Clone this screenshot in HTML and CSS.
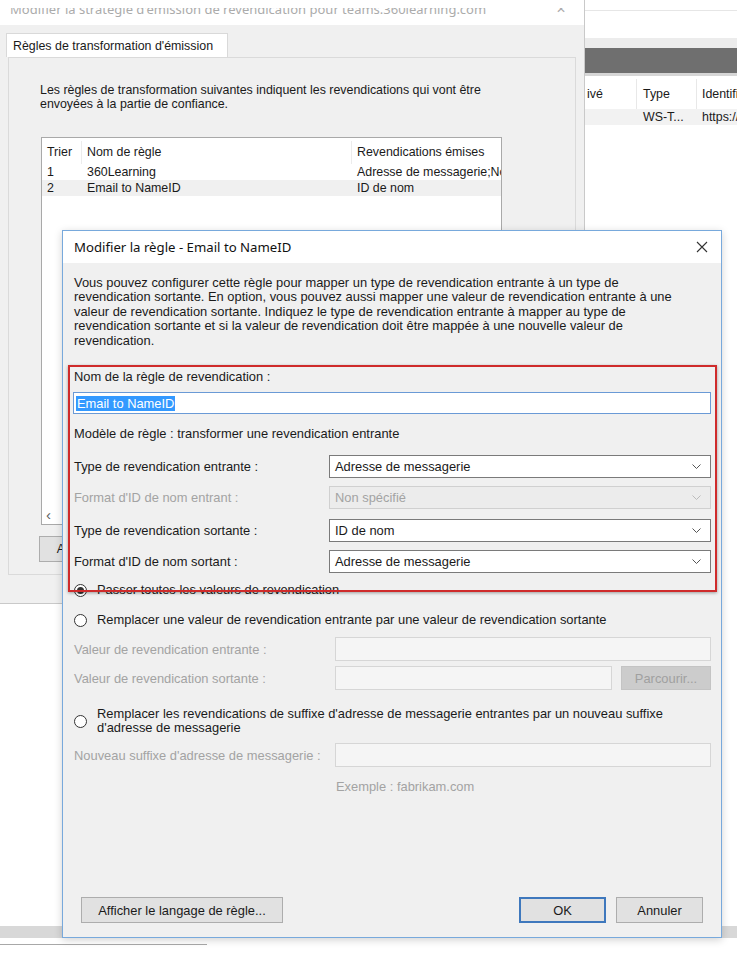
FILE: index.html
```html
<!DOCTYPE html>
<html lang="fr">
<head>
    <meta charset="utf-8">
    <link rel="stylesheet" href="styles.css">
</head>
<body>
<div class="desk">

    <!-- console behind, only its right edge shows -->
    <div class="mmc">
        <div class="mmc-top"></div>
        <div class="mmc-band"></div>
        <div class="mmc-dark"></div>
        <div class="mmc-head">
            <span class="m1">ivé</span><span class="m2">Type</span><span class="m3">Identificateur</span>
        </div>
        <div class="mmc-row">
            <span class="m1"></span><span class="m2">WS-T...</span><span class="m3">https://</span>
        </div>
    </div>

    <div class="under"></div>
    <div class="under-line"></div>

    <!-- properties window -->
    <div class="props">
        <div class="props-title">
            <div class="caption">
                <span>Modifier la stratégie d'émission de revendication pour teams.360learning.com</span>
                <span class="props-x">✕</span>
            </div>
        </div>
        <div class="props-body">
            <div class="tabs">
                <div class="tab">Règles de transformation d'émission</div>
            </div>
            <div class="tab-page">
                <p class="intro">Les règles de transformation suivantes indiquent les revendications qui vont être<br>envoyées à la partie de confiance.</p>
                <div class="list">
                    <div class="list-head">
                        <span class="ca">Trier</span><span class="cb">Nom de règle</span><span class="cc">Revendications émises</span>
                    </div>
                    <div class="list-row">
                        <span class="ca">1</span><span class="cb">360Learning</span><span class="cc">Adresse de messagerie;Nom</span>
                    </div>
                    <div class="list-row sel">
                        <span class="ca">2</span><span class="cb">Email to NameID</span><span class="cc">ID de nom</span>
                    </div>
                    <div class="list-fill"></div>
                    <div class="hscroll"><span>‹</span></div>
                </div>
                <div class="list-buttons">
                    <button class="btn">Ajouter une règle...</button>
                </div>
            </div>
        </div>
    </div>

    <!-- rule dialog -->
    <div class="dialog">
        <div class="dlg-title">
            <span>Modifier la règle - Email to NameID</span>
            <svg class="dlg-x" width="12" height="12" viewBox="0 0 12 12"><path d="M1 1L11 11M11 1L1 11" stroke="#333" stroke-width="1.1" fill="none"/></svg>
        </div>
        <div class="dlg-body">
            <p class="desc">Vous pouvez configurer cette règle pour mapper un type de revendication entrante à un type de<br>revendication sortante. En option, vous pouvez aussi mapper une valeur de revendication entrante à une<br>valeur de revendication sortante. Indiquez le type de revendication entrante à mapper au type de<br>revendication sortante et si la valeur de revendication doit être mappée à une nouvelle valeur de<br>revendication.</p>

            <div class="lbl name-lbl">Nom de la règle de revendication :</div>
            <div class="textbox focus"><span class="hl">Email to NameID</span></div>
            <div class="lbl tpl-lbl">Modèle de règle : transformer une revendication entrante</div>

            <div class="row r1">
                <span class="row-lbl">Type de revendication entrante :</span>
                <div class="combo"><span>Adresse de messagerie</span><svg width="9" height="5" viewBox="0 0 9 5"><path d="M0.5 0.5L4.5 4.5L8.5 0.5" stroke="#555" fill="none"/></svg></div>
            </div>
            <div class="row r2 off">
                <span class="row-lbl">Format d'ID de nom entrant :</span>
                <div class="combo"><span>Non spécifié</span><svg width="9" height="5" viewBox="0 0 9 5"><path d="M0.5 0.5L4.5 4.5L8.5 0.5" stroke="#bbb" fill="none"/></svg></div>
            </div>
            <div class="row r3">
                <span class="row-lbl">Type de revendication sortante :</span>
                <div class="combo"><span>ID de nom</span><svg width="9" height="5" viewBox="0 0 9 5"><path d="M0.5 0.5L4.5 4.5L8.5 0.5" stroke="#555" fill="none"/></svg></div>
            </div>
            <div class="row r4">
                <span class="row-lbl">Format d'ID de nom sortant :</span>
                <div class="combo"><span>Adresse de messagerie</span><svg width="9" height="5" viewBox="0 0 9 5"><path d="M0.5 0.5L4.5 4.5L8.5 0.5" stroke="#555" fill="none"/></svg></div>
            </div>

            <div class="radio rad1"><span class="dot on"></span>Passer toutes les valeurs de revendication</div>
            <div class="radio rad2"><span class="dot"></span>Remplacer une valeur de revendication entrante par une valeur de revendication sortante</div>

            <div class="row off v1">
                <span class="row-lbl">Valeur de revendication entrante :</span>
                <div class="textbox"></div>
            </div>
            <div class="row off v2">
                <span class="row-lbl">Valeur de revendication sortante :</span>
                <div class="textbox"></div>
                <button class="btn browse">Parcourir...</button>
            </div>

            <div class="radio rad3"><span class="dot"></span><span>Remplacer les revendications de suffixe d'adresse de messagerie entrantes par un nouveau suffixe<br>d'adresse de messagerie</span></div>

            <div class="row off v3">
                <span class="row-lbl">Nouveau suffixe d'adresse de messagerie :</span>
                <div class="textbox"></div>
            </div>
            <div class="example">Exemple : fabrikam.com</div>

            <div class="dlg-buttons">
                <button class="btn wide">Afficher le langage de règle...</button>
                <span class="spacer"></span>
                <button class="btn default">OK</button>
                <button class="btn">Annuler</button>
            </div>
        </div>
        <div class="redbox"></div>
    </div>

</div>
</body>
</html>
```

FILE: styles.css
```css
html, body {
    margin: 0;
    background: #fff;
}

.desk {
    position: relative;
    width: 737px;
    height: 957px;
    overflow: hidden;
    font-family: "Liberation Sans", Arial, sans-serif;
    font-size: 12.4px;
    color: #1a1a1a;
}

button {
    font: inherit;
}

/* ---- console at the right ---- */

.mmc {
    position: absolute;
    left: 585px;
    top: 0;
    width: 200px;
    height: 160px;
    background: #fff;
}

.mmc-top {
    height: 10px;
    border-bottom: 1px solid #e6e6e6;
}

.mmc-band {
    margin-top: 27px;
    height: 10px;
    background: #ececec;
}

.mmc-dark {
    height: 25px;
    background: #6f6f6f;
    border-bottom: 3px solid #d6d6d6;
}

.mmc-head,
.mmc-row {
    display: flex;
    white-space: nowrap;
}

.mmc-head {
    margin-top: 3px;
    height: 30px;
    align-items: center;
}

.mmc-head span {
    height: 30px;
    line-height: 30px;
    border-right: 1px solid #e8e8e8;
}

.mmc-row {
    height: 16px;
    line-height: 16px;
    background: #f2f2f2;
}

.m1 { width: 52px; padding-left: 2px; box-sizing: border-box; flex: none; }
.m2 { width: 60px; padding-left: 6px; box-sizing: border-box; flex: none; }
.m3 { width: 80px; padding-left: 5px; box-sizing: border-box; flex: none; }

/* ---- stuff peeking below ---- */

.under {
    position: absolute;
    left: 0;
    top: 926px;
    width: 737px;
    height: 12px;
    background: #d8d8d8;
}

.under-line {
    position: absolute;
    left: 0;
    top: 944px;
    width: 207px;
    height: 1px;
    background: #a8a8a8;
}

/* ---- properties window ---- */

.props {
    position: absolute;
    left: -10px;
    top: -15px;
    width: 594px;
    height: 618px;
    background: #f0f0f0;
    border-right: 1px solid #c9c9c9;
    border-bottom: 1px solid #c9c9c9;
    display: flex;
    flex-direction: column;
}

.props-title {
    height: 40px;
    box-sizing: border-box;
    padding: 23px 16px 0 20px;
    background: #fff;
}

/* the screenshot cuts the caption through the middle */
.caption {
    height: 9px;
    overflow: hidden;
    display: flex;
    align-items: flex-end;
    color: #ababab;
    font-family: "Noto Sans", sans-serif;
    font-size: 13px;
    white-space: nowrap;
}

.caption span {
    line-height: 16px;
    flex: none;
}

.caption .props-x {
    margin-left: auto;
    margin-right: 2px;
    font-size: 12px;
}

.props-body {
    padding: 8px 8px 0 16px;
}

.tabs {
    display: flex;
    height: 24px;
}

.tab {
    background: #fff;
    border: 1px solid #d9d9d9;
    border-bottom: none;
    padding: 0 6px;
    line-height: 24px;
    width: 208px;
}

.tab-page {
    margin-left: 2px;
    height: 516px;
    border: 1px solid #dadada;
    background: #f0f0f0;
}

.intro {
    margin: 25px 0 0 31px;
    line-height: 14.4px;
}

.list {
    margin: 25px 0 0 32px;
    width: 459px;
    height: 386px;
    background: #fff;
    border: 1px solid #a9a9a9;
    display: flex;
    flex-direction: column;
}

.list-head,
.list-row {
    display: flex;
    white-space: nowrap;
    overflow: hidden;
}

.list-head {
    height: 23px;
    line-height: 23px;
    margin-top: 3px;
}

.list-head span {
    border-right: 1px solid #ececec;
}

.list-row {
    height: 16px;
    line-height: 16px;
}

.list-row.sel {
    background: #f0f0f0;
}

.ca { width: 40px; padding-left: 5px; box-sizing: border-box; flex: none; }
.cb { width: 270px; padding-left: 5px; box-sizing: border-box; flex: none; }
.cc { width: 160px; padding-left: 5px; box-sizing: border-box; flex: none; }

.list-fill {
    flex: 1;
}

.hscroll {
    height: 18px;
    line-height: 18px;
    padding-left: 4px;
    font-size: 15px;
    color: #606060;
}

.list-buttons {
    margin: 11px 0 0 30px;
}

.btn {
    background: #e1e1e1;
    border: 1px solid #adadad;
    color: #1a1a1a;
    padding: 0;
    height: 26px;
}

.list-buttons .btn {
    width: 140px;
}

/* ---- rule dialog ---- */

.dialog {
    position: absolute;
    left: 62px;
    top: 230px;
    width: 660px;
    height: 708px;
    box-sizing: border-box;
    border: 1px solid #78a9dc;
    background: #f0f0f0;
    box-shadow: 0 2px 8px rgba(0, 0, 0, 0.18);
    display: flex;
    flex-direction: column;
    font-size: 12.9px;
}

.dlg-title {
    height: 32px;
    background: #fff;
    display: flex;
    align-items: center;
    padding: 0 13px 0 11px;
    font-family: "Noto Sans", sans-serif;
    font-size: 13.2px;
    color: #111;
}

.dlg-x {
    margin-left: auto;
}

.dlg-body {
    flex: 1;
    padding: 13px 10px 14px 10px;
    display: flex;
    flex-direction: column;
}

.desc {
    margin: 0 0 0 1px;
    line-height: 14.4px;
}

.lbl {
    height: 16px;
    line-height: 16px;
    padding-left: 1px;
}

.name-lbl { margin-top: 21px; }
.tpl-lbl { margin-top: 12px; }

.textbox {
    height: 22px;
    box-sizing: border-box;
    background: #fff;
    border: 1px solid #abadb3;
    display: flex;
    align-items: center;
    padding-left: 2px;
}

.textbox.focus {
    margin-top: 7px;
    border-color: #6a9ad6;
}

.hl {
    background: #3399ff;
    color: #fff;
    line-height: 15px;
    padding: 0 1px;
}

.row {
    display: flex;
    align-items: center;
    height: 23px;
}

.row-lbl {
    width: 255px;
    padding-left: 1px;
    flex: none;
    white-space: nowrap;
}

.r1 { margin-top: 13px; }
.r2 { margin-top: 8px; }
.r3 { margin-top: 10px; }
.r4 { margin-top: 8px; }

.combo {
    flex: 1;
    height: 23px;
    box-sizing: border-box;
    background: #fff;
    border: 1px solid #7a7a7a;
    display: flex;
    align-items: center;
    padding: 0 9px 0 5px;
}

.combo span {
    flex: 1;
}

.off .row-lbl,
.off .combo span {
    color: #a3a3a3;
}

.off .combo {
    background: #ececec;
    border-color: #d0d0d0;
}

.radio {
    display: flex;
    align-items: flex-start;
    line-height: 14px;
    padding-left: 1px;
}

.dot {
    width: 13px;
    height: 13px;
    box-sizing: border-box;
    border: 1px solid #333;
    border-radius: 50%;
    background: #fff;
    margin: 1px 10px 0 0;
    flex: none;
    position: relative;
}

.dot.on::after {
    content: "";
    position: absolute;
    left: 2px;
    top: 2px;
    width: 7px;
    height: 7px;
    border-radius: 50%;
    background: #333;
}

.rad1 { margin-top: 10px; }
.rad2 { margin-top: 16px; }
.rad3 { margin-top: 17px; align-items: center; }

.v1, .v2, .v3 {
    height: 24px;
}

.v1 { margin-top: 10px; }
.v2 { margin-top: 5px; }
.v3 { margin-top: 8px; }

.off .textbox {
    flex: 1;
    height: 24px;
    margin-left: 6px;
    background: #f5f5f5;
    border-color: #d6d6d6;
}

.browse {
    width: 90px;
    height: 24px;
    margin-left: 9px;
    background: #cccccc;
    border-color: #c4c4c4;
    color: #a0a0a0;
}

.example {
    margin: 12px 0 0 263px;
    color: #a3a3a3;
    line-height: 16px;
}

.dlg-buttons {
    margin-top: auto;
    display: flex;
    padding: 0 8px 0 8px;
}

.dlg-buttons .btn {
    width: 87px;
    height: 26px;
}

.dlg-buttons .wide {
    width: 202px;
}

.dlg-buttons .default {
    border: 2px solid #3f78bd;
    margin-right: 10px;
}

.spacer {
    flex: 1;
}

/* red highlight drawn over the dialog */
.redbox {
    position: absolute;
    left: 5px;
    top: 134px;
    width: 649px;
    height: 227px;
    box-sizing: border-box;
    border: 2px solid #cf2b2b;
    box-shadow: 0 1px 3px rgba(0, 0, 0, 0.35);
}
```
